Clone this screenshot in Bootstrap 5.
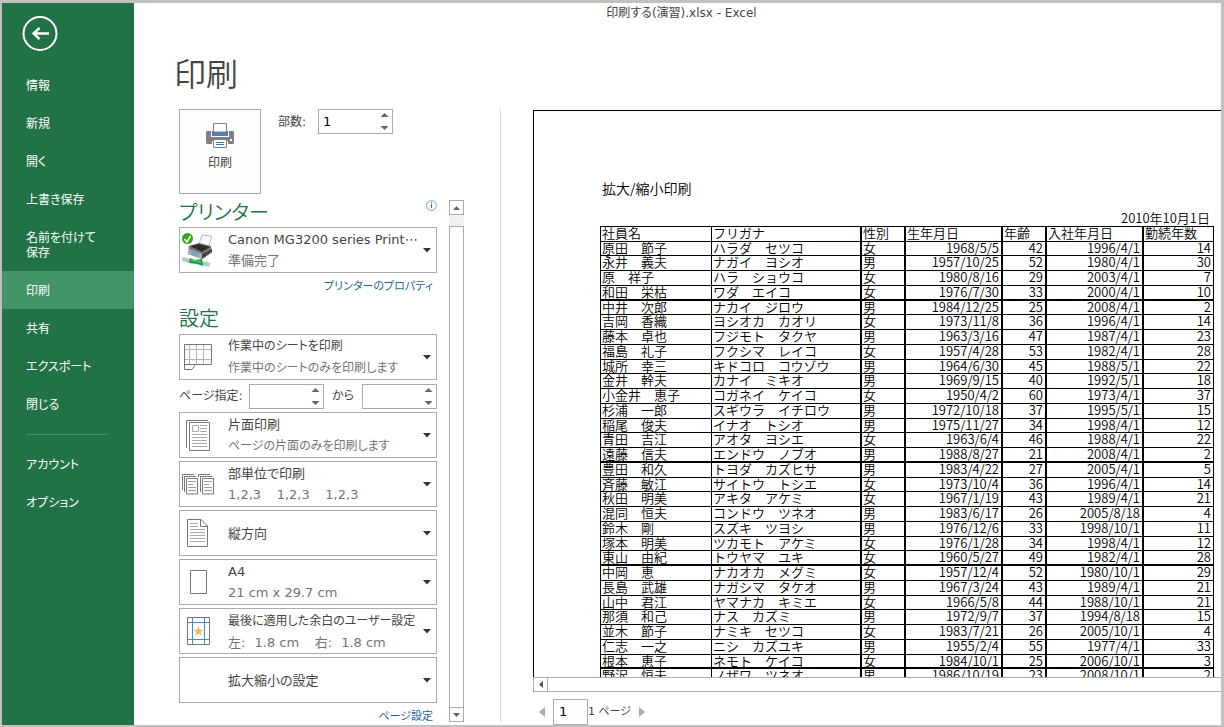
<!DOCTYPE html>
<html lang="ja">
<head>
<meta charset="utf-8">
<meta name="viewport" content="width=device-width, initial-scale=1">
<title>印刷する(演習).xlsx - Excel</title>
<link href="https://cdn.jsdelivr.net/npm/bootstrap@5.3.0/dist/css/bootstrap.min.css" rel="stylesheet">
<style>
  :root { --xl-green: #217346; --xl-line: #ababab; --xl-text: #444; }
  body { font-family: "DejaVu Sans", "Noto Sans CJK JP", sans-serif; font-size: 12px; line-height: 15px; color: var(--xl-text); font-feature-settings: "palt"; }
  button, input { font-feature-settings: inherit; }
  .app-window { border: solid #c0c0c0; border-width: 3px 3px 2px 2px; background: #fff; }
  .side-menu { width: 132px; background: var(--xl-green); }
  .back-btn { width: 36px; height: 36px; margin: 13px 0 14px 20px; }
  .side-menu .nav-link { color: #fff; padding: 13px 24px 10px; border-radius: 0; }
  .side-menu .nav-link.active { background: #439467; }
  .side-menu hr { margin: 11px 26px 10px 24px; border-color: #439467; opacity: 1; }
  .doc-title { font-size: 12px; line-height: 20px; padding-left: 8px; }
  .page-title { font-size: 32px; line-height: 46px; font-weight: 350; padding: 29px 0 11px 40px; }
  .print-pane { padding: 0 36px 0 45px; }
  .pane-rule { width: 1px; background: #d8d8d8; margin-bottom: 3px; }
  .print-btn { width: 82px; height: 85px; border: 1px solid var(--xl-line); background: #fdfdfd; color: var(--xl-text); padding: 0 0 10px; }
  .top-row { height: 91px; }
  .copies-label { margin: 6px 12px 0 17px; }
  .spin-box { width: 75px; height: 25px; border: 1px solid var(--xl-line); padding: 0 3px 0 4px; background: #fff; }
  .spin-box input, .page-no { width: 100%; min-width: 0; border: 0; padding: 0; color: #000; font-size: 13px; outline: 0; background: transparent; }
  .settings-col { width: 258px; }
  .settings-col h2 { font-size: 20px; line-height: 27px; font-weight: 350; color: var(--xl-green); }
  .settings-head { padding: 9px 0 1px; }
  .link-row { font-size: 11px; line-height: 20px; padding: 4px 4px 0 0; }
  .link-row a { color: #265f99; }
  .opt-btn { height: 46px; border: 1px solid var(--xl-line); background: #fff; color: var(--xl-text); font-size: 13px; line-height: 21px; }
  .opt-btn .sub-line { color: #737373; }
  .opt-btn .kana-line { font-size: 12px; }
  .opt-icon { width: 36px; }
  .opt-text { margin-left: 12px; }
  .opt-caret { margin-right: 5px; }
  .stack-3 { gap: 3px; }
  .range-row { margin-top: 1px; }
  .range-label { width: 70px; }
  .range-to { width: 38px; }
  .v-scroll { width: 15px; margin: 0 0 3px 12px; background: #f1f1f1; }
  .scroll-end { width: 15px; height: 15px; border: 1px solid var(--xl-line); background: #fff; }
  .v-thumb { margin-top: 11px; border: solid var(--xl-line); border-width: 1px 1px 0; background: #fff; }
  .preview-col { padding: 1px 0 0 32px; }
  .sheet-view { border: solid #000; border-width: 1px 0 0 1px; padding: 69px 8px 0 66px; font-family: "Noto Sans CJK JP", sans-serif; font-feature-settings: normal; font-size: 13px; color: #000; font-weight: 350; }
  .sheet-body { width: 614px; }
  .sheet-name { font-size: 14px; line-height: 16px; padding-left: 2px; margin-bottom: 15px; }
  .sheet-date { line-height: 14px; padding-right: 4px; margin-bottom: 1px; }
  .staff { table-layout: fixed; width: 614px; border-collapse: separate; border-spacing: 0; border-top: 1px solid #000; border-left: 1px solid #000; }
  .staff th, .staff td { height: 15px; padding: 0 2px 0 1px; line-height: 12px; vertical-align: top; font-weight: 350; white-space: nowrap; border: solid #000; border-width: 0 1px 1px 0; }
  .staff tr:nth-child(4n+2) td { height: 14px; }
  .staff tr.block-end td { border-bottom-width: 2px; }
  .staff td:nth-child(n+2):nth-child(-n+6), .staff th:nth-child(n+2):nth-child(-n+6) { border-right-width: 2px; }
  .staff td.num-cell { text-align: right; }
  .h-scroll { height: 15px; border: solid var(--xl-line); border-width: 1px 0; }
  .h-scroll .scroll-end { margin-top: -1px; }
  .pager { height: 33px; padding: 6px 0 0 6px; font-size: 11px; }
  .page-no { width: 35px; height: 26px; border: 1px solid var(--xl-line); padding-left: 5px; margin: 0 0 0 8px; }
</style>
</head>
<body>
<div class="app-window d-flex vh-100 overflow-hidden">
  <nav class="side-menu flex-shrink-0" aria-label="ファイル">
    <button type="button" class="back-btn btn p-0 border-0 d-block" aria-label="戻る">
      <svg width="36" height="36" viewBox="0 0 36 36" class="d-block" fill="none" stroke="#fff"><circle cx="18" cy="17.500" r="16.500" stroke-width="2"/><path d="M27 17.500H11.500M17.500 12l-6 5.500 6 5.500" stroke-width="2.400"/></svg>
    </button>
    <div class="nav nav-pills flex-column">
      <a class="nav-link" href="#">情報</a>
      <a class="nav-link" href="#">新規</a>
      <a class="nav-link" href="#">開く</a>
      <a class="nav-link" href="#">上書き保存</a>
      <a class="nav-link" href="#">名前を付けて<br>保存</a>
      <a class="nav-link active" href="#" aria-current="page">印刷</a>
      <a class="nav-link" href="#">共有</a>
      <a class="nav-link" href="#">エクスポート</a>
      <a class="nav-link" href="#">閉じる</a>
      <hr>
      <a class="nav-link" href="#">アカウント</a>
      <a class="nav-link" href="#">オプション</a>
    </div>
  </nav>

  <main class="d-flex flex-column flex-grow-1 overflow-hidden">
    <div class="doc-title text-center">印刷する(演習).xlsx - Excel</div>
    <h1 class="page-title m-0">印刷</h1>
    <div class="d-flex flex-grow-1 overflow-hidden">

      <section class="print-pane d-flex flex-column flex-shrink-0">
        <div class="top-row d-flex align-items-start flex-shrink-0">
          <button type="button" class="print-btn d-flex flex-column align-items-center justify-content-center gap-1">
            <svg width="28" height="25" viewBox="0 0 28 25" class="mb-1 flex-shrink-0"><path d="M1.500 8H26.500Q28 8 28 9.500V19.500Q28 21 26.500 21H22V18H6V21H1.500Q0 21 0 19.500V9.500Q0 8 1.500 8Z" fill="#808080"/><path d="M5 7H23V14H5Z" fill="#fff"/><path d="M6 8H22V13H6Z" fill="#4a80bd"/><path d="M7.500.500H20.500V9H7.500Z" fill="#fff" stroke="#808080"/><path d="M5 14H23V17H5Z" fill="#808080"/><path d="M7.500 16.500H20.500V24.500H7.500Z" fill="#fff" stroke="#808080"/><path d="M10 19.500H18M10 21.500H18" stroke="#3f78b8"/><path d="M24 16h2v2h-2z" fill="#fff"/></svg>
            印刷
          </button>
          <label for="copies" class="copies-label">部数:</label>
          <div class="spin-box d-flex align-items-center"><input id="copies" type="text" inputmode="numeric" value="1"><svg class="flex-shrink-0" width="9" height="19" viewBox="0 0 9 19" fill="#666"><path d="M4.500 1 8.500 5H.500zM4.500 18 8.500 14H.500z"/></svg></div>
        </div>

        <div class="d-flex flex-grow-1 overflow-hidden">
          <div class="settings-col overflow-hidden">
            <div class="d-flex justify-content-between align-items-start">
              <h2 class="m-0">プリンター</h2>
              <svg width="11" height="11" viewBox="0 0 11 11"><circle cx="5.500" cy="5.500" r="5" fill="#f5f9ff" stroke="#7ba4d9"/><path d="M5 2h1v1H5zM5 4h1v4H5z" fill="#3c68a8"/></svg>
            </div>
            <button type="button" class="opt-btn w-100 p-0 d-flex align-items-center text-start">
              <span class="opt-icon flex-shrink-0 text-center"><svg width="32" height="34" viewBox="0 0 32 34"><path d="M18 8 20 2 30 3 26 15 17 13Z" fill="#f8f8f8" stroke="#bbb"/><path d="m7 13 10-3 12 3 1 6-10 7-14-5Z" fill="#777"/><path d="m8 13 9-2 11 3-8 5Z" fill="#2c2c2c"/><path d="m7 16 13 5v5L6 21Z" fill="#aaa"/><path d="m9 18 7 2v3l-7-2Z" fill="#5aa9d8"/><path d="m20 21 10-5v3l-10 7Z" fill="#444"/><path d="m0 26 8 2" stroke="#b4c8c4" stroke-width="4"/><path d="m20 30 8 2" stroke="#b4c8c4" stroke-width="4"/><path d="m8 25 5 2 7-1 1 7-6-2-8-1Z" fill="#13a33a"/><path d="m9 27 10 2" stroke="#5fdc77"/><circle cx="5.500" cy="5.500" r="5.500" fill="#35a612"/><path d="m2.500 6 2.500 3 3.500-6" fill="none" stroke="#fff" stroke-width="1.600"/></svg></span>
              <span class="opt-text flex-grow-1">Canon MG3200 series Print⋯<br><span class="sub-line">準備完了</span></span>
              <svg class="opt-caret" width="9" height="5"><path d="M1 0h8L5 4.500z" fill="#333"/></svg>
            </button>
            <div class="link-row text-end"><a class="text-decoration-none" href="#">プリンターのプロパティ</a></div>
            <h2 class="settings-head m-0">設定</h2>
            <div class="d-flex flex-column stack-3">
              <button type="button" class="opt-btn w-100 p-0 d-flex align-items-center text-start">
                <span class="opt-icon flex-shrink-0 text-center"><svg width="28" height="26" viewBox="0 0 28 26" fill="none" stroke="#b5b5b5"><path d="M5.500 0V21M12.500 0V21M19.500 0V21M0 5.500H28M0 15.500H28"/><path d="M.500.500H27.500V20.500H11.500L8 25.500H.500ZM.500 20.500H11" stroke="#777"/></svg></span>
                <span class="opt-text flex-grow-1"><span class="kana-line">作業中のシートを印刷</span><br><span class="sub-line kana-line">作業中のシートのみを印刷します</span></span>
                <svg class="opt-caret" width="9" height="5"><path d="M1 0h8L5 4.500z" fill="#333"/></svg>
              </button>
              <div class="range-row d-flex align-items-center">
                <label class="range-label" for="from">ページ指定:</label>
                <div class="spin-box d-flex align-items-center"><input id="from" type="text" inputmode="numeric"><svg class="flex-shrink-0" width="9" height="19" viewBox="0 0 9 19" fill="#666"><path d="M4.500 1 8.500 5H.500zM4.500 18 8.500 14H.500z"/></svg></div>
                <label class="range-to text-center" for="to">から</label>
                <div class="spin-box d-flex align-items-center"><input id="to" type="text" inputmode="numeric"><svg class="flex-shrink-0" width="9" height="19" viewBox="0 0 9 19" fill="#666"><path d="M4.500 1 8.500 5H.500zM4.500 18 8.500 14H.500z"/></svg></div>
              </div>
              <button type="button" class="opt-btn w-100 p-0 d-flex align-items-center text-start">
                <span class="opt-icon flex-shrink-0 text-center"><svg width="24" height="31" viewBox="0 0 24 31" fill="none" stroke="#777"><path d="M.500 28V.500H22"/><path d="M3.500 2.500H23.500V30.500H3.500Z"/><path d="M6.500 5.500H12.500V11.500H6.500ZM14 5.500H21M14 8.500H21M14 11.500H21M6 14.500H21M6 17.500H21M6 20.500H21M6 23.500H21M6 26.500H21" stroke="#aaa"/></svg></span>
                <span class="opt-text flex-grow-1">片面印刷<br><span class="sub-line kana-line">ページの片面のみを印刷します</span></span>
                <svg class="opt-caret" width="9" height="5"><path d="M1 0h8L5 4.500z" fill="#333"/></svg>
              </button>
              <button type="button" class="opt-btn w-100 p-0 d-flex align-items-center text-start">
                <span class="opt-icon flex-shrink-0 text-center"><svg width="32" height="21" viewBox="0 0 32 21" fill="none" stroke="#777"><path d="M.500 16V.500H12M2.500 18V2.500H14M16.500 3V.500H28M18.500 3V2.500H30"/><path d="M4.500 4.500H15.500V20H4.500ZM20.500 4.500H31.500V20H20.500Z"/><path d="M18.500 2.500V18"/><path d="M6 7.500H14M6 10.500H11M6 13.500H14M6 16.500H14M22 7.500H30M22 10.500H27M22 13.500H30M22 16.500H30" stroke="#999"/></svg></span>
                <span class="opt-text flex-grow-1">部単位で印刷<br><span class="sub-line">1,2,3&emsp;&thinsp;1,2,3&emsp;&thinsp;1,2,3</span></span>
                <svg class="opt-caret" width="9" height="5"><path d="M1 0h8L5 4.500z" fill="#333"/></svg>
              </button>
              <button type="button" class="opt-btn w-100 p-0 d-flex align-items-center text-start">
                <span class="opt-icon flex-shrink-0 text-center"><svg width="22" height="28" viewBox="0 0 22 28" fill="none" stroke="#777"><path d="M.500.500H14L20.500 7V27.500H.500ZM13.500.500V7.500H20.500"/><path d="M3 4.500H11M3 7.500H11M3 10.500H18M3 13.500H18M3 16.500H18M3 19.500H18M3 22.500H18" stroke="#aaa"/></svg></span>
                <span class="opt-text flex-grow-1">縦方向</span>
                <svg class="opt-caret" width="9" height="5"><path d="M1 0h8L5 4.500z" fill="#333"/></svg>
              </button>
              <button type="button" class="opt-btn w-100 p-0 d-flex align-items-center text-start">
                <span class="opt-icon flex-shrink-0 text-center"><svg width="17" height="24" viewBox="0 0 17 24" fill="none" stroke="#777"><path d="M.500.500H16.500V23.500H.500Z"/></svg></span>
                <span class="opt-text flex-grow-1">A4<br><span class="sub-line">21 cm x 29.7 cm</span></span>
                <svg class="opt-caret" width="9" height="5"><path d="M1 0h8L5 4.500z" fill="#333"/></svg>
              </button>
              <button type="button" class="opt-btn w-100 p-0 d-flex align-items-center text-start">
                <span class="opt-icon flex-shrink-0 text-center"><svg width="23" height="28" viewBox="0 0 23 28" fill="none"><path d="M5.500 0V28M17.500 0V28M0 5.500H23M0 22.500H23" stroke="#4a88c8"/><path d="M.500.500H22.500V27.500H.500Z" stroke="#777"/><path d="m11.500 9 1.300 3.700h3.700l-3 2.300 1.200 3.800-3.200-2.300-3.200 2.300 1.200-3.800-3-2.300h3.700Z" fill="#e8b96a"/></svg></span>
                <span class="opt-text flex-grow-1 text-nowrap"><span class="kana-line">最後に適用した余白のユーザー設定</span><br><span class="sub-line">左:&ensp;&thinsp;1.8 cm&emsp;&thinsp;右:&ensp;&thinsp;1.8 cm</span></span>
                <svg class="opt-caret flex-shrink-0" width="9" height="5"><path d="M1 0h8L5 4.500z" fill="#333"/></svg>
              </button>
              <button type="button" class="opt-btn w-100 p-0 d-flex align-items-center text-start">
                <span class="opt-icon flex-shrink-0"></span>
                <span class="opt-text flex-grow-1">拡大縮小の設定</span>
                <svg class="opt-caret" width="9" height="5"><path d="M1 0h8L5 4.500z" fill="#333"/></svg>
              </button>
            </div>
            <div class="link-row text-end"><a class="text-decoration-none" href="#">ページ設定</a></div>
          </div>
          <div class="v-scroll d-flex flex-column">
            <button type="button" class="scroll-end p-0 d-flex align-items-center justify-content-center" aria-label="上へ"><svg width="7" height="4"><path d="M0 4h7L3.500 0z" fill="#666"/></svg></button>
            <div class="v-thumb flex-grow-1"></div>
            <button type="button" class="scroll-end p-0 d-flex align-items-center justify-content-center" aria-label="下へ"><svg width="7" height="4"><path d="M0 0h7L3.500 4z" fill="#666"/></svg></button>
          </div>
        </div>
      </section>
      <div class="pane-rule flex-shrink-0"></div>

      <section class="preview-col d-flex flex-column flex-grow-1 overflow-hidden">
        <div class="sheet-view flex-grow-1 overflow-hidden">
          <div class="sheet-body">
            <div class="sheet-name">拡大/縮小印刷</div>
            <div class="sheet-date text-end">2010年10月1日</div>
            <table class="staff">
              <colgroup><col style="width:111px"><col style="width:150px"><col style="width:44px"><col style="width:97px"><col style="width:44px"><col style="width:97px"><col style="width:70px"></colgroup>
              <tbody id="staff-rows">
                <tr><th>社員名</th><th>フリガナ</th><th>性別</th><th>生年月日</th><th>年齢</th><th>入社年月日</th><th>勤続年数</th></tr>
              </tbody>
            </table>
          </div>
        </div>
        <div class="h-scroll flex-shrink-0"><button type="button" class="scroll-end p-0 d-flex align-items-center justify-content-center" aria-label="左へ"><svg width="4" height="7"><path d="M4 0v7L0 3.500z" fill="#555"/></svg></button></div>
        <div class="pager d-flex align-items-center flex-shrink-0">
          <button type="button" class="btn p-0 border-0 d-flex" aria-label="前のページ"><svg width="6" height="10"><path d="M6 0v10L0 5z" fill="#aaa"/></svg></button>
          <input class="page-no" type="text" value="1" aria-label="ページ番号">
          <span>1 ページ</span>
          <button type="button" class="btn p-0 border-0 d-flex ms-2" aria-label="次のページ"><svg width="6" height="10"><path d="M0 0v10L6 5z" fill="#aaa"/></svg></button>
        </div>
      </section>
    </div>
  </main>
</div>
<script src="https://cdn.jsdelivr.net/npm/bootstrap@5.3.0/dist/js/bootstrap.bundle.min.js"></script>
<script>
  const staff = `原田　節子,ハラダ　セツコ,女,1968/5/5,42,1996/4/1,14
永井　義夫,ナガイ　ヨシオ,男,1957/10/25,52,1980/4/1,30
原　祥子,ハラ　ショウコ,女,1980/8/16,29,2003/4/1,7
和田　栄枯,ワダ　エイコ,女,1976/7/30,33,2000/4/1,10
中井　次郎,ナカイ　ジロウ,男,1984/12/25,25,2008/4/1,2
吉岡　香織,ヨシオカ　カオリ,女,1973/11/8,36,1996/4/1,14
藤本　卓也,フジモト　タクヤ,男,1963/3/16,47,1987/4/1,23
福島　礼子,フクシマ　レイコ,女,1957/4/28,53,1982/4/1,28
城所　幸三,キドコロ　コウゾウ,男,1964/6/30,45,1988/5/1,22
金井　幹夫,カナイ　ミキオ,男,1969/9/15,40,1992/5/1,18
小金井　恵子,コガネイ　ケイコ,女,1950/4/2,60,1973/4/1,37
杉浦　一郎,スギウラ　イチロウ,男,1972/10/18,37,1995/5/1,15
稲尾　俊夫,イナオ　トシオ,男,1975/11/27,34,1998/4/1,12
青田　吉江,アオタ　ヨシエ,女,1963/6/4,46,1988/4/1,22
遠藤　信夫,エンドウ　ノブオ,男,1988/8/27,21,2008/4/1,2
豊田　和久,トヨダ　カズヒサ,男,1983/4/22,27,2005/4/1,5
斉藤　敏江,サイトウ　トシエ,女,1973/10/4,36,1996/4/1,14
秋田　明美,アキタ　アケミ,女,1967/1/19,43,1989/4/1,21
混同　恒夫,コンドウ　ツネオ,男,1983/6/17,26,2005/8/18,4
鈴木　剛,スズキ　ツヨシ,男,1976/12/6,33,1998/10/1,11
塚本　明美,ツカモト　アケミ,女,1976/1/28,34,1998/4/1,12
東山　由紀,トウヤマ　ユキ,女,1960/5/27,49,1982/4/1,28
中岡　恵,ナカオカ　メグミ,女,1957/12/4,52,1980/10/1,29
長島　武雄,ナガシマ　タケオ,男,1967/3/24,43,1989/4/1,21
山中　君江,ヤマナカ　キミエ,女,1966/5/8,44,1988/10/1,21
那須　和己,ナス　カズミ,男,1972/9/7,37,1994/8/18,15
並木　節子,ナミキ　セツコ,女,1983/7/21,26,2005/10/1,4
仁志　一之,ニシ　カズユキ,男,1955/2/4,55,1977/4/1,33
根本　恵子,ネモト　ケイコ,女,1984/10/1,25,2006/10/1,3
野沢　恒夫,ノザワ　ツネオ,男,1986/10/19,23,2008/10/1,2`.split("\n");
  const blockEnds = [4, 15, 22, 29];
  const body = document.getElementById("staff-rows");
  staff.forEach((line, i) => {
    const tr = body.insertRow();
    if (blockEnds.includes(i + 1)) tr.className = "block-end";
    line.split(",").forEach((value, col) => {
      const td = tr.insertCell();
      td.textContent = value;
      if (col > 2) td.className = "num-cell";
    });
  });
</script>
</body>
</html>
